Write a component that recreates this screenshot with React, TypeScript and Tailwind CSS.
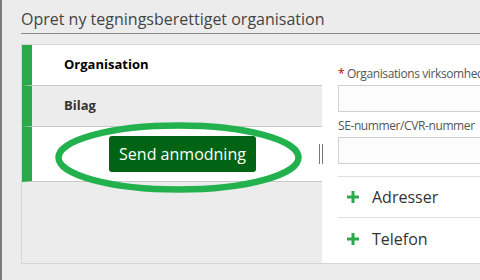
const font = { fontFamily: '"Open Sans", "Noto Sans", sans-serif' };

function PlusIcon() {
  return (
    <svg width="12" height="12" viewBox="0 0 12 12" className="shrink-0">
      <rect x="4.5" y="0" width="3" height="12" fill="#2aa84a" />
      <rect x="0" y="4.5" width="12" height="3" fill="#2aa84a" />
    </svg>
  );
}

const tabs = [
  { label: 'Organisation', active: true },
  { label: 'Bilag', active: false },
];

export default function App() {
  return (
    <div
      className="relative w-[480px] h-[280px] overflow-hidden bg-[#ececec] border-l-2 border-[#7a7a7a]"
      style={font}
    >
      {/* Page title */}
      <div className="ml-[19px] pt-[8px] pb-[3px] border-b border-[#8a8a8a]">
        <h1 className="text-[16px] leading-[22px] text-[#444]">Opret ny tegningsberettiget organisation</h1>
      </div>

      {/* Panel */}
      <div className="relative ml-[19px] mt-[10px] h-[220px] flex border-t border-l border-b border-[#d6d6d6]">
        {/* Tabs column */}
        <div className="w-[300px] shrink-0 flex flex-col">
          {tabs.map((t) => (
            <div
              key={t.label}
              className={`h-[41px] flex items-center pl-[32px] border-l-[10px] border-l-[#2aa84a] border-b border-b-[#c8c8c8] ${
                t.active ? 'bg-white text-black' : 'bg-[#ececec] text-[#333]'
              }`}
            >
              <span className="text-[13px] font-bold">{t.label}</span>
            </div>
          ))}
          <div className="h-[55px] flex items-center pl-[77px] bg-white border-l-[10px] border-l-[#2aa84a] border-b border-b-[#c8c8c8]">
            <button className="h-[36px] w-[147px] rounded-[3px] bg-[#006414] text-white text-[16px]">
              Send anmodning
            </button>
          </div>
        </div>

        {/* Form pane */}
        <div className="flex-1 min-w-0 overflow-hidden bg-white pl-[16px] pt-[20px] whitespace-nowrap">
          <label className="block text-[12px] tracking-[-0.4px] leading-[18px] text-[#555]">
            <span className="text-[#c00000]">*</span> Organisations virksomhed
          </label>
          <div className="mt-[2px] h-[27px] border border-[#cfcfcf] bg-[#fcfcfc] w-[200px]" />
          <label className="block mt-[5px] text-[12px] tracking-[-0.4px] leading-[18px] text-[#555]">SE-nummer/CVR-nummer</label>
          <div className="mt-[2px] h-[27px] border border-[#cfcfcf] bg-[#fcfcfc] w-[200px]" />
          <div className="mt-[12px] border-t border-[#e0e0e0]">
            {['Adresser', 'Telefon'].map((s, i) => (
              <div
                key={s}
                className={`h-[41px] flex items-center gap-[13px] pl-[9px] ${i === 0 ? 'border-b border-[#e0e0e0]' : ''}`}
              >
                <PlusIcon />
                <span className="text-[16px] text-[#333]">{s}</span>
              </div>
            ))}
          </div>
        </div>

        {/* Splitter grip */}
        <div className="absolute left-[297px] top-[99px] w-[4px] h-[20px] border-l border-r border-[#777]" />
      </div>

      {/* Hand-drawn highlight */}
      <svg className="absolute left-0 top-0 pointer-events-none" width="480" height="280">
        <ellipse cx="176.5" cy="157.5" rx="120" ry="32" fill="none" stroke="#22b14c" strokeWidth="6.5" />
      </svg>
    </div>
  );
}
